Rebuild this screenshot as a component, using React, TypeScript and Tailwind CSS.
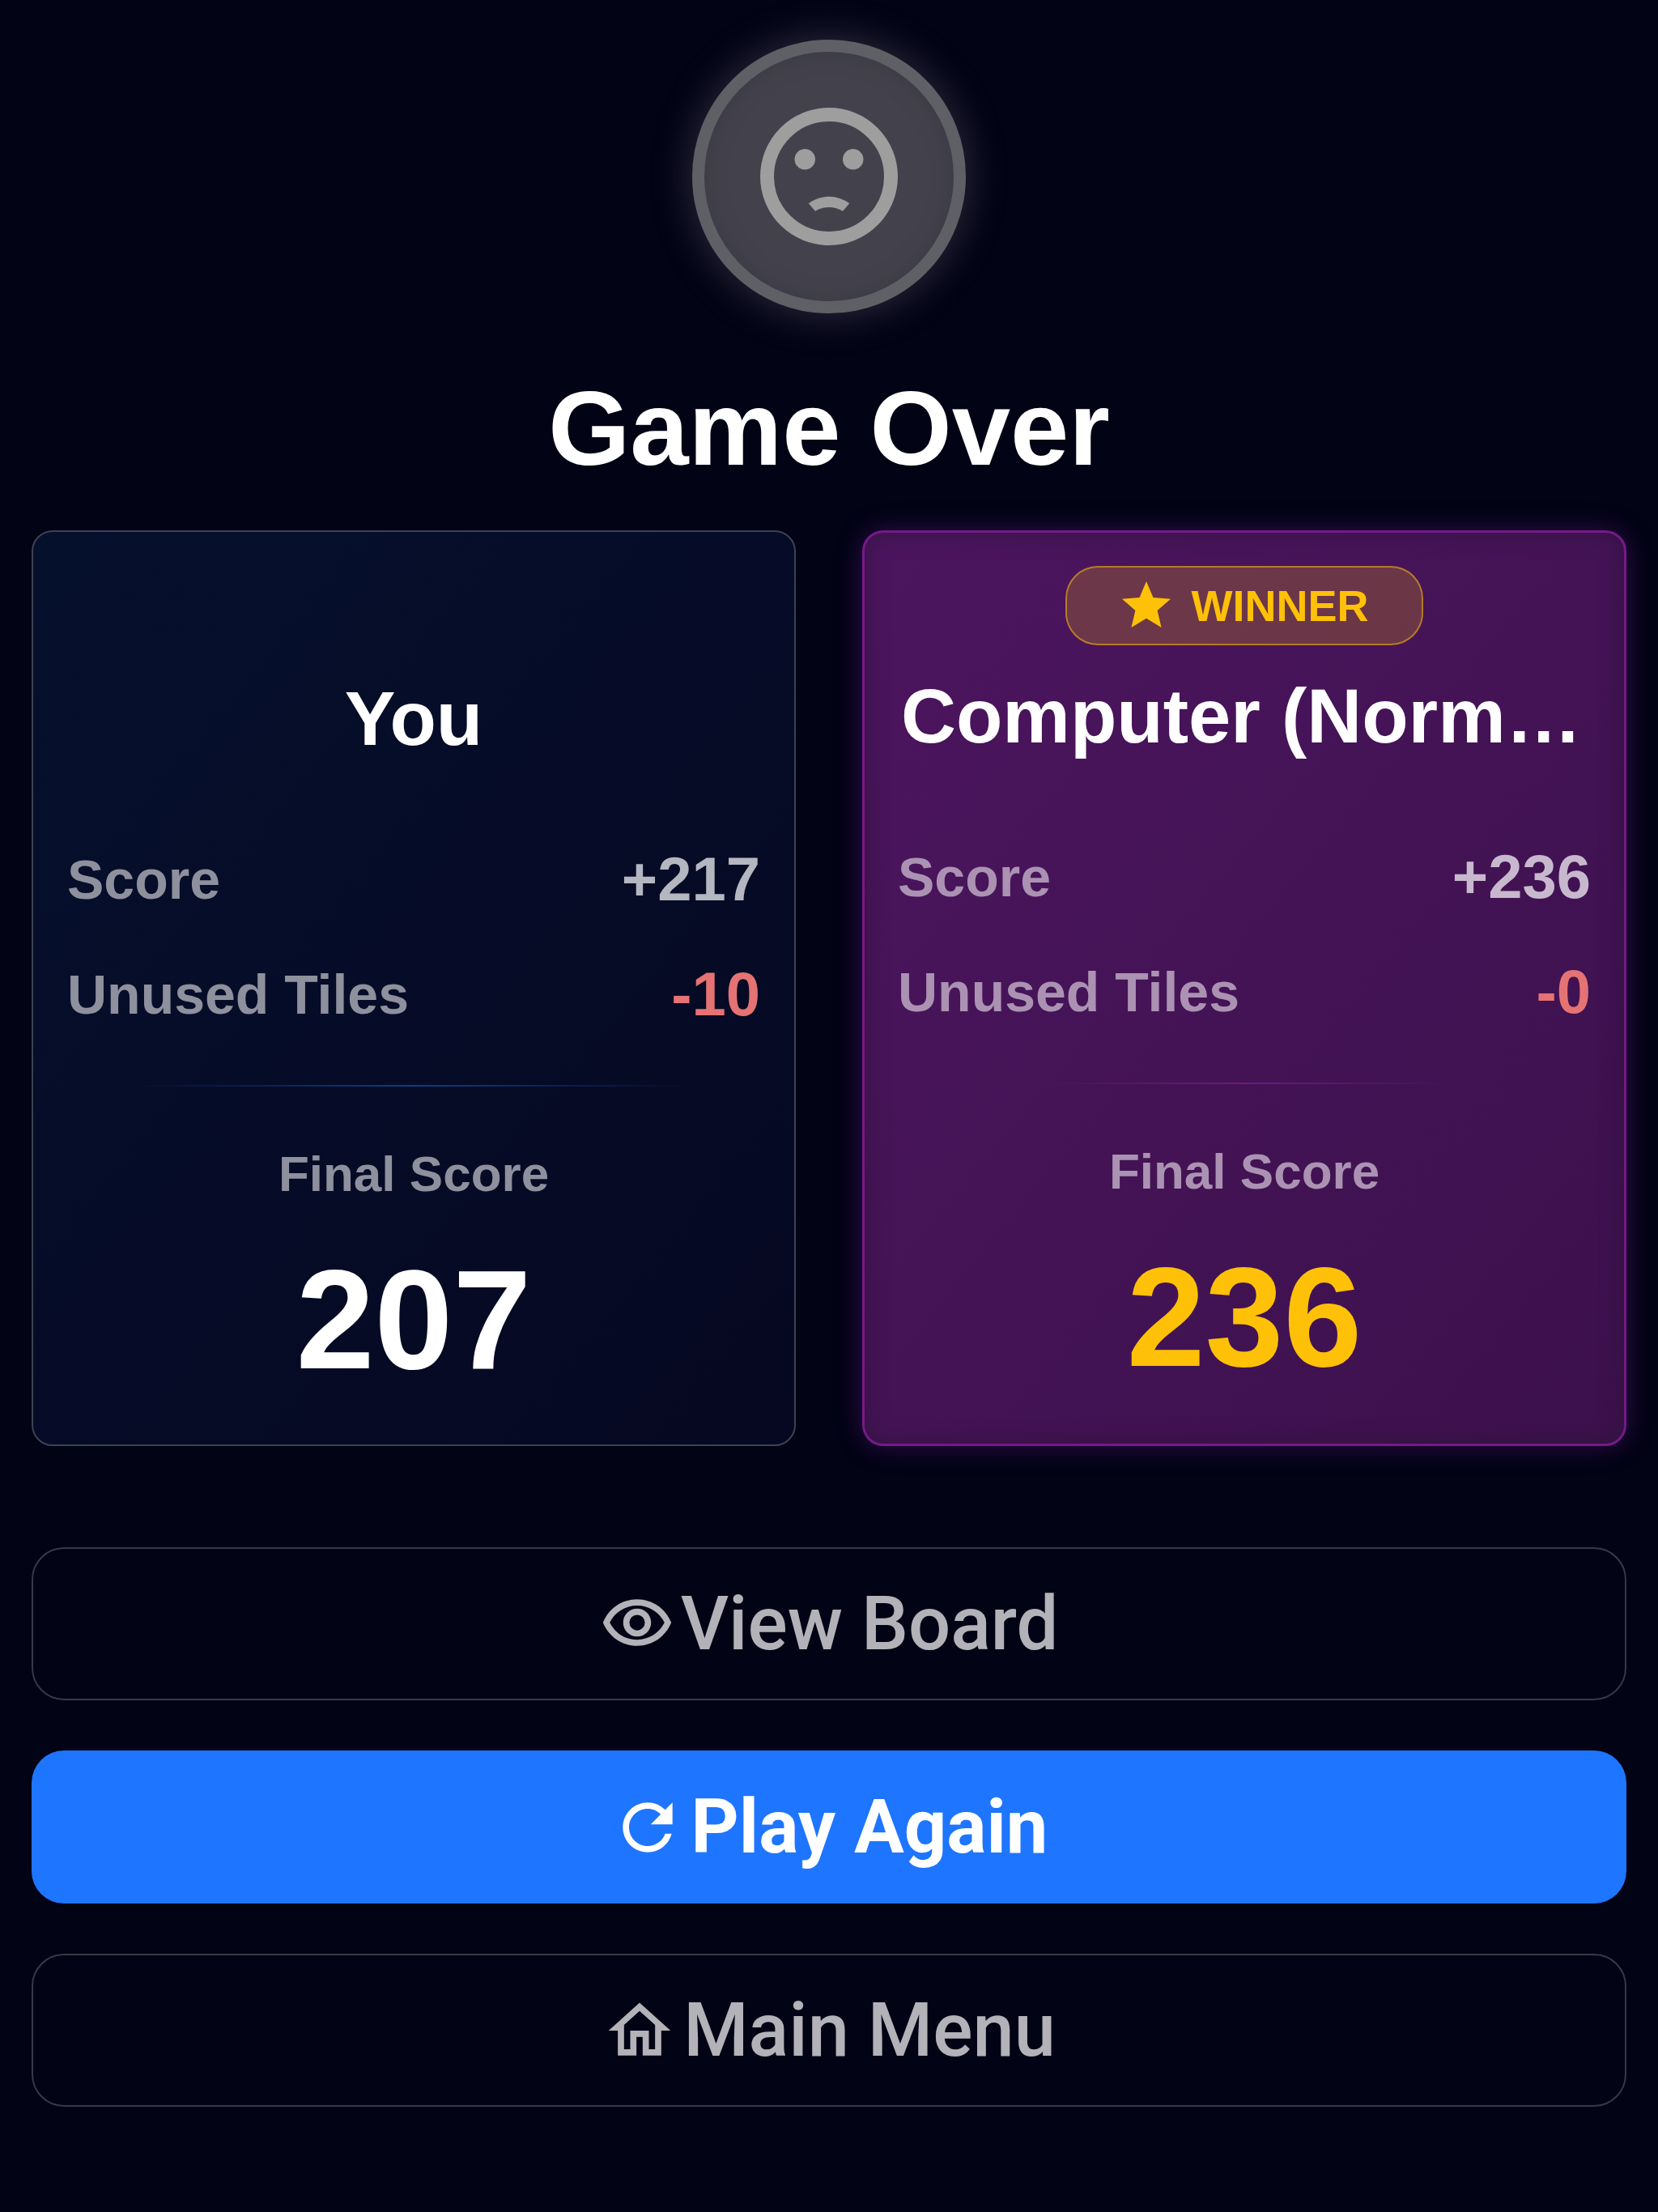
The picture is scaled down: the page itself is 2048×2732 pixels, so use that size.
import { MdOutlineHome, MdOutlineVisibility, MdRefresh, MdStar } from 'react-icons/md';
import { clsx } from 'clsx';

interface PlayerResult {
  id: string;
  name: string;
  score: number;
  unusedTiles: number;
  isWinner: boolean;
}

const players: PlayerResult[] = [
  { id: 'you', name: 'You', score: 217, unusedTiles: 10, isWinner: false },
  { id: 'computer', name: 'Computer (Normal)', score: 236, unusedTiles: 0, isWinner: true },
];

function SadFace() {
  return (
    <svg viewBox="0 0 24 24" className="w-[204px] h-[204px] text-[#9e9e9e]" fill="currentColor" aria-hidden="true">
      <circle cx="12" cy="12" r="9" fill="none" stroke="currentColor" strokeWidth="2" />
      <circle cx="8.5" cy="9.5" r="1.5" />
      <circle cx="15.5" cy="9.5" r="1.5" />
      <path d="M9.03 15.92a4.93 4.93 0 0 1 5.94 0L14 17.02a3.84 3.84 0 0 0-4 0z" />
    </svg>
  );
}

function WinnerBadge() {
  return (
    <div className="flex items-center gap-5 h-full pl-[62px] pr-[66px] rounded-[40px] border-2 border-[#ffc107]/50 bg-[#ffc107]/20 text-[#ffc107]">
      <MdStar className="w-[72px] h-[72px]" />
      <span className="text-[54px] leading-[60px] font-bold">WINNER</span>
    </div>
  );
}

function PlayerCard({ player }: { player: PlayerResult }) {
  const { name, score, unusedTiles, isWinner } = player;
  const labelColor = isWinner ? 'text-[#ab92b3]' : 'text-[#8e909d]';

  return (
    <section
      className={clsx(
        'min-w-0 flex flex-col items-center rounded-[26px] font-bold',
        isWinner
          ? 'px-[41px] pt-[41px] pb-[60px] border-3 border-[#761a88] bg-linear-to-br from-[#4c155f] to-[#3c114c] shadow-[0_0_32px_rgba(123,31,162,0.4),inset_0_0_28px_rgba(40,20,50,0.6)]'
          : 'px-[42px] pt-[45px] pb-[58px] border-2 border-[#3d4255] bg-linear-to-br from-[#05102d] to-[#060821]'
      )}
    >
      <div className="h-[98px]">{isWinner && <WinnerBadge />}</div>

      <h2 className="w-full mt-8 px-1 truncate text-center text-[94px] leading-[112px] text-white">{name}</h2>

      <dl className="w-full mt-[100px] flex flex-col gap-[58px]">
        <div className="flex items-center justify-between leading-[84px]">
          <dt className={clsx('text-[68px]', labelColor)}>Score</dt>
          <dd className={clsx('text-[76px]', isWinner ? 'text-[#c8b8ce]' : 'text-[#b4b6c0]')}>+{score}</dd>
        </div>
        <div className="flex items-center justify-between leading-[84px]">
          <dt className={clsx('text-[68px]', labelColor)}>Unused Tiles</dt>
          <dd className="text-[76px] text-[#e57373]">-{unusedTiles}</dd>
        </div>
      </dl>

      <div
        className={clsx(
          'w-full h-[2px] my-[70px] bg-linear-to-r from-transparent to-transparent',
          isWinner ? 'from-20% via-[#6d1a80] to-80%' : 'from-10% via-[#0f3b85] to-90%'
        )}
      />

      <p className={clsx('text-[62px] leading-[76px]', labelColor)}>Final Score</p>
      <p className={clsx('mt-[46px] text-[174px] leading-[192px]', isWinner ? 'text-[#ffc107]' : 'text-white')}>
        {score - unusedTiles}
      </p>
    </section>
  );
}

const buttonBase =
  'flex items-center justify-center gap-2 h-[189px] rounded-[40px] font-[Roboto,sans-serif] text-[92px] leading-none';
const outlineButton = 'border-2 border-[#383946] text-[#b3b2b9] font-medium';

export default function App() {
  return (
    <main className="min-h-screen bg-[#020314] px-[39px] pt-[49px] pb-[128px] flex flex-col font-['Liberation_Sans',Arial,sans-serif]">
      <div className="self-center flex items-center justify-center w-[338px] h-[338px] rounded-full border-[15px] border-[#5f6065] bg-[#43424c] shadow-[0_0_52px_rgba(158,150,170,0.3),inset_0_0_24px_rgba(50,50,62,0.5)]">
        <SadFace />
      </div>

      <h1 className="mt-[68px] text-center text-[130px] leading-[148px] font-bold text-white">Game Over</h1>

      <div className="mt-[52px] grid grid-cols-2 gap-[82px]">
        {players.map((player) => (
          <PlayerCard key={player.id} player={player} />
        ))}
      </div>

      <div className="mt-[125px] flex flex-col gap-[62px]">
        <button type="button" className={clsx(buttonBase, outlineButton)}>
          <MdOutlineVisibility className="w-[92px] h-[92px]" />
          View Board
        </button>
        <button type="button" className={clsx(buttonBase, 'bg-[#1e75ff] text-white font-bold')}>
          <MdRefresh className="w-[92px] h-[92px]" />
          Play Again
        </button>
        <button type="button" className={clsx(buttonBase, outlineButton)}>
          <MdOutlineHome className="w-[92px] h-[92px]" />
          Main Menu
        </button>
      </div>
    </main>
  );
}
